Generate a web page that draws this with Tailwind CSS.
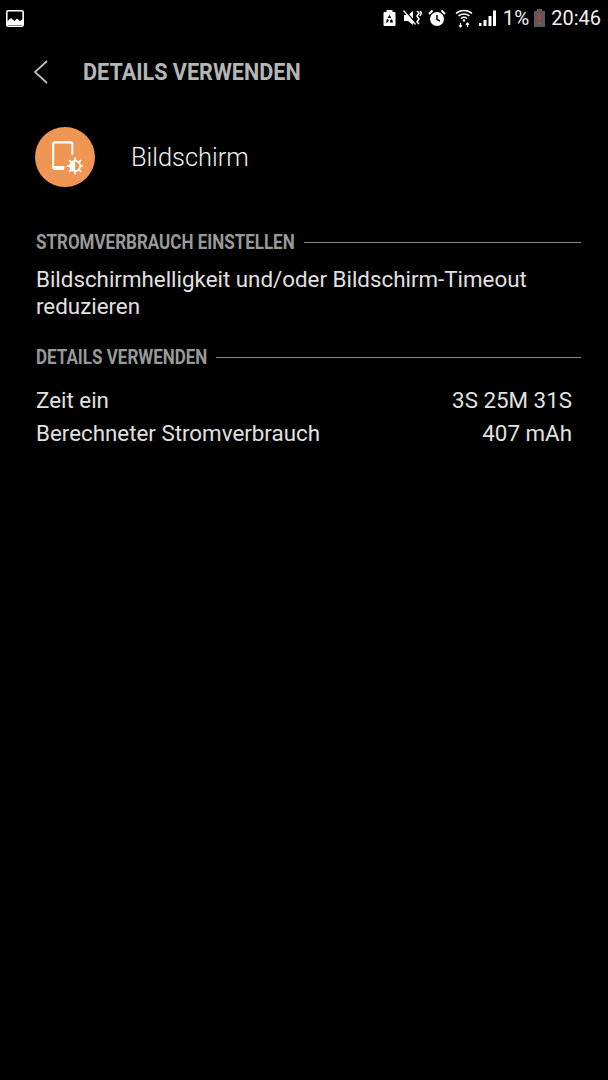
<!DOCTYPE html>
<html><head><script src="https://cdn.jsdelivr.net/npm/@tailwindcss/browser@4"></script></head>
<body class="bg-black">
<div class="w-[608px] h-[1080px] bg-black text-[#eaeaea] font-['Roboto',sans-serif] overflow-hidden">
  <div class="h-9 flex items-center justify-between pl-[6px] pr-[7px] text-white">
    <svg width="18" height="17" viewBox="0 0 18 17"><rect x="0.800" y="0.800" width="16.400" height="15.400" rx="1.500" fill="#000" stroke="#fff" stroke-width="1.600"/><path d="M1 15V11.500l4-3.500 3.500 3 2.500-2.500 3 2.500 3-2V15z" fill="#fff"/></svg>
    <div class="flex items-center">
      <svg width="15" height="18" viewBox="0 0 14 18"><path d="M4 1h6v2h2a1 1 0 0 1 1 1v12a1 1 0 0 1-1 1H2a1 1 0 0 1-1-1V4a1 1 0 0 1 1-1h2z" fill="#fff"/><path d="M7 6l2 3H5zM4.500 10l2 1-1.500 2.500H3.500zM9.500 10l1 3.500H7.500v-2z" fill="#000"/></svg>
      <svg width="20" height="18" viewBox="0 0 20 18" class="ml-[6px]"><path d="M1 6h4l5-4v14l-5-4H1z" fill="#fff"/><path d="M2 1.500l12 14" stroke="#000" stroke-width="1.500"/><path d="M0.500 1.500l12 14" stroke="#fff" stroke-width="1.200"/><path d="M14 2l2 2-2 3 2 3-2 3 2 2M17 2l1.500 2-1.500 3" fill="none" stroke="#fff" stroke-width="1.500"/></svg>
      <svg width="18" height="18" viewBox="0 0 18 18" class="ml-[5px]"><circle cx="9" cy="10" r="7" fill="#fff"/><path d="M9 6v4.500l3 1.500" fill="none" stroke="#000" stroke-width="1.500"/><path d="M1 5l3.500-3.500M17 5l-3.500-3.500" stroke="#fff" stroke-width="2"/></svg>
      <svg width="18" height="20" viewBox="0 0 18 20" class="ml-[9px]"><path d="M1 5.500c4.500-4 11.500-4 16 0M3.500 8c3-2.600 8-2.600 11 0M6 10.500c1.800-1.500 4.200-1.500 6 0" fill="none" stroke="#fff" stroke-width="1.500"/><circle cx="9" cy="12.500" r="1.200" fill="#fff"/><path d="M5.500 15v4M4 17.500l1.500 1.500 1.500-1.500M12.500 19v-4M11 16.500l1.500-1.500 1.500 1.500" fill="none" stroke="#fff" stroke-width="1.200"/></svg>
      <svg width="19" height="18" viewBox="0 0 19 18" class="ml-[5px]"><path d="M1 17h2.500v-3H1zM5.500 17h3V11h-3zM10.500 17h3V7h-3zM15 17h3V1.500h-3z" fill="#fff"/></svg>
      <span class="text-[20.500px] leading-none ml-[6px] text-[#f0f0f0]">1%</span>
      <svg width="14" height="20" viewBox="0 0 14 20" class="ml-[4px]"><path d="M4 1h5v2h3v16H1V3h3z" fill="#5a5a5a"/><rect x="5.500" y="5" width="2" height="7" fill="#d9361f"/><rect x="5.500" y="13.500" width="2" height="2.500" fill="#d9361f"/></svg>
      <span class="text-[20px] leading-none ml-[4px] text-[#f0f0f0]">20:46</span>
    </div>
  </div>

  <div class="h-[72px] flex items-center pl-[33px]">
    <svg width="16" height="24" viewBox="0 0 16 24" class="mr-[34px] -mt-[1px]"><path d="M14 1L2 12l12 11" fill="none" stroke="#bdbdbd" stroke-width="1.800"/></svg>
    <span class="text-[#b5b5b5] text-[24px] font-bold leading-none origin-left scale-x-[0.9] whitespace-nowrap">DETAILS VERWENDEN</span>
  </div>

  <div class="flex items-center pl-[35px] mt-[19px] h-[59px]">
    <div class="w-[60px] h-[60px] rounded-full bg-[#f09654] flex items-center justify-center shrink-0">
      <svg width="36" height="36" viewBox="0 0 32 32" class="-ml-[1px]"><path d="M5.500 26V4.500a1.500 1.500 0 0 1 1.500-1.500h14a1.500 1.500 0 0 1 1.500 1.500V14M5.500 25h9" fill="none" stroke="#fff" stroke-width="1.800"/><path d="M5 24.500h11l-1 3H7a2 2 0 0 1-2-2z" fill="#fff"/><circle cx="25" cy="24" r="4.500" fill="none" stroke="#fff" stroke-width="1.500"/><path d="M25 20v8a4 4 0 0 0 0-8z" fill="#fff" transform="rotate(180 25 24)"/><path d="M25 16.500v3M25 28.500v3M17.500 24h3M29.500 24h3M19.700 18.700l2.100 2.100M28.200 27.200l2.100 2.100M19.700 29.300l2.100-2.100M28.200 20.800l2.100-2.100" stroke="#fff" stroke-width="1.500"/></svg>
    </div>
    <span class="ml-[36px] mt-[2px] text-[25.400px] leading-none text-[#f0f0f0] font-light">Bildschirm</span>
  </div>

  <div class="mt-[45px] pl-[36px] pr-[27px] h-[22px] flex items-center">
    <span class="text-[#999999] text-[20px] font-bold leading-none whitespace-nowrap origin-left scale-x-[0.85] w-[268px] shrink-0">STROMVERBRAUCH EINSTELLEN</span>
    <div class="flex-1 h-px bg-[#8a8a8a]"></div>
  </div>
  <p class="pl-[36px] mt-[13px] text-[22.350px] leading-[27px] text-[#e0e0e0] whitespace-nowrap">Bildschirmhelligkeit und/oder Bildschirm-Timeout<br>reduzieren</p>

  <div class="mt-[26px] pl-[36px] pr-[27px] h-[22px] flex items-center">
    <span class="text-[#999999] text-[20px] font-bold leading-none whitespace-nowrap origin-left scale-x-[0.85] w-[180px] shrink-0">DETAILS VERWENDEN</span>
    <div class="flex-1 h-px bg-[#8a8a8a]"></div>
  </div>
  <div class="pl-[36px] pr-[36px] mt-[16px] text-[22.350px] leading-[33px] text-[#e0e0e0]">
    <div class="flex justify-between"><span>Zeit ein</span><span>3S 25M 31S</span></div>
    <div class="flex justify-between"><span>Berechneter Stromverbrauch</span><span>407 mAh</span></div>
  </div>
</div>
</body></html>
